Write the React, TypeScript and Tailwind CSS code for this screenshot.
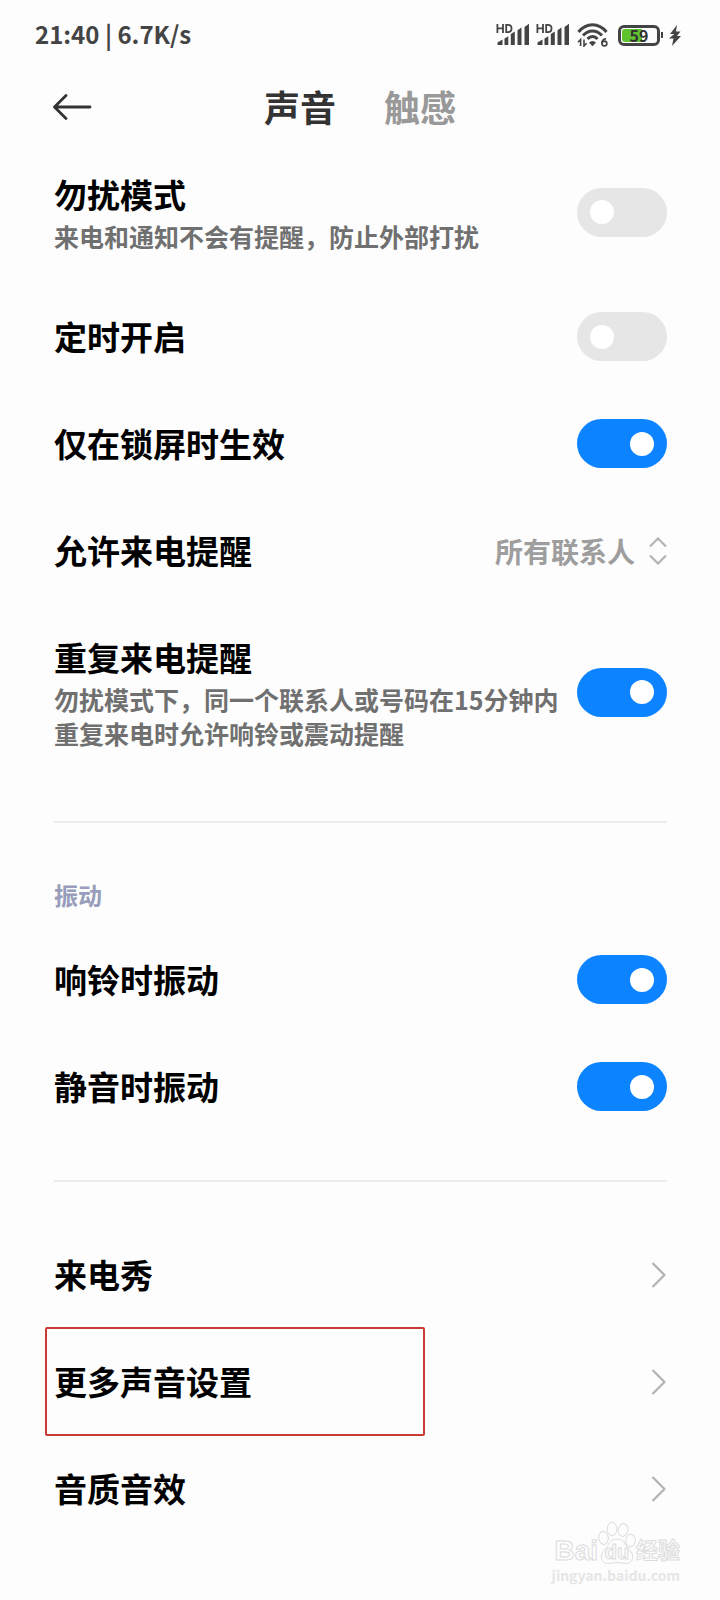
// App.tsx
import { ReactNode, useState } from "react";

function SignalIcon() {
  return (
    <svg width="34" height="24" viewBox="0 0 34 24" aria-hidden="true">
      <g fill="none" stroke="#444" strokeWidth="1.8">
        <path d="M1.4 1v9M7 1v9M1.4 5.4H7" />
        <path d="M10.2 1.9h1.6c5 0 5 7.2 0 7.2h-1.600z" />
      </g>
      <g fill="#444">
        <path d="M1.500 22v-2.400l5-3V22zM8.500 22v-6.600l3.800-2.200V22z" />
        <path d="M14.800 22V11l4-2.600V22zM21.500 22V7.200l4-2.800V22zM28.500 22V4l4.500-3.200V22z" />
      </g>
    </svg>
  );
}

function WifiIcon() {
  return (
    <svg width="32" height="24" viewBox="0 0 32 24" aria-hidden="true">
      <g fill="none" stroke="#444" strokeWidth="3">
        <path d="M1.500 9C9.500-.6 21.500-.6 29.500 9" />
        <path d="M6 12.600c5.600-6.200 13.400-6.200 19 0" />
        <path d="M10.500 16c3-3.400 7-3.400 10 0" />
      </g>
      <path d="M12 19.500c2.200-2 4.800-2 7 0l-3.500 3.700z" fill="#444" />
      <path d="M3.600 23v-6.500l-2.600 2.800M7 16.500V23l2.600-2.800" fill="none" stroke="#444" strokeWidth="1.600" />
      <path d="M29 15.600c-3 .8-4.200 3-4.200 4.800" fill="none" stroke="#444" strokeWidth="1.700" />
      <circle cx="27.400" cy="20.500" r="2.400" fill="none" stroke="#444" strokeWidth="1.700" />
    </svg>
  );
}

function StatusBar() {
  return (
    <header className="flex h-[70px] items-center justify-between pl-[35px] pr-[39px] text-[#444]">
      <span className="pb-[2px] text-[24px] font-bold">21:40 | 6.7K/s</span>
      <div className="flex items-center">
        <div className="flex gap-[6px]">
          <SignalIcon />
          <SignalIcon />
        </div>
        <span className="ml-[7px]">
          <WifiIcon />
        </span>
        <div className="ml-[9px] flex h-[21px] w-[42px] items-center rounded-[6px] border-[3px] border-[#444] p-px">
          <div className="relative h-full w-full">
            <div className="h-full w-[59%] rounded-l-[3px] bg-[#5fc32e]"></div>
            <span className="absolute inset-0 flex items-center justify-center text-[16px] font-bold text-[#333]">59</span>
          </div>
        </div>
        <div className="ml-px h-[6px] w-[2px] bg-[#444]"></div>
        <svg className="ml-[6px]" width="12" height="21" viewBox="0 0 12 21" aria-hidden="true">
          <path d="M8 0 1 9h4.200L0 13.500h4.500L3 21l9-10H8L11.500 6.500H7z" fill="#444" />
        </svg>
      </div>
    </header>
  );
}

function TitleBar() {
  return (
    <nav className="relative flex h-[71px] items-center justify-center gap-[48px] text-[36px] font-bold">
      <button aria-label="返回" className="absolute left-[53px]">
        <svg width="40" height="28" viewBox="0 0 40 28" fill="none" stroke="#333" strokeWidth="2.800" strokeLinecap="round" strokeLinejoin="round">
          <path d="M37 15H2M13 3.500 1.500 15 13 26.500" />
        </svg>
      </button>
      <button className="text-[#333]">声音</button>
      <button className="text-[#999]">触感</button>
    </nav>
  );
}

function Toggle({ id, defaultOn }: { id: string; defaultOn?: boolean }) {
  const [on, setOn] = useState(!!defaultOn);
  return (
    <input
      id={id}
      type="checkbox"
      role="switch"
      checked={on}
      onChange={() => setOn(!on)}
      className="flex h-[49px] w-[90px] shrink-0 appearance-none items-center rounded-full bg-[#e6e6e6] px-[13px] before:size-[24px] before:rounded-full before:bg-white checked:justify-end checked:bg-[#0d84ff]"
    />
  );
}

type RowProps = { id: string; title: string; desc?: string; children: ReactNode };

function Row({ id, title, desc, children }: RowProps) {
  return (
    <div className={desc ? "flex items-center justify-between py-[30px]" : "flex h-[107px] items-center justify-between"}>
      <label htmlFor={id} className="min-w-0">
        <span className="block pb-[2px] text-[33px] leading-[46px] font-bold text-black">{title}</span>
        {desc && <span className="block text-[25px] leading-[34px] font-bold text-[#707070]">{desc}</span>}
      </label>
      {children}
    </div>
  );
}

function LinkRow({ title, marked }: { title: string; marked?: boolean }) {
  return (
    <a href="#" className="relative flex h-[107px] items-center justify-between">
      <span className="pb-[2px] text-[33px] leading-[46px] font-bold text-black">{title}</span>
      <svg width="16" height="28" viewBox="0 0 16 28" fill="none" stroke="#b3b3b3" strokeWidth="2.200" strokeLinejoin="round">
        <path d="M1.500 2l12 12-12 12" />
      </svg>
      {marked && (
        <span className="absolute -inset-y-px -left-[9px] w-[62%] rounded-[2px] border-2 border-[#cc3a36]"></span>
      )}
    </a>
  );
}

function Watermark() {
  return (
    <div className="pointer-events-none absolute right-[40px] bottom-[14px] flex flex-col items-end text-[#fdfdfd]">
      <div className="flex items-end font-[Liberation_Sans,Noto_Sans_CJK_SC,sans-serif] font-bold [-webkit-text-stroke:1px_#dcdcdc]">
        <span className="text-[28px] leading-[28px]">Bai</span>
        <span className="relative flex h-[44px] w-[38px] items-end justify-center">
          <svg className="absolute inset-0" width="38" height="44" viewBox="0 0 38 44" fill="#fdfdfd" stroke="#dcdcdc">
            <ellipse cx="5.500" cy="17" rx="4.800" ry="6.500" transform="rotate(-8 5 17)" />
            <ellipse cx="14" cy="8" rx="4.800" ry="6.800" />
            <ellipse cx="25" cy="9" rx="4.800" ry="6.500" transform="rotate(12 25 9)" />
            <ellipse cx="32.500" cy="19.500" rx="4.800" ry="6.300" transform="rotate(8 32 19)" />
            <path d="M19 18c-8 0-8 7-12.500 11C1 34 3 42.500 9.500 42.500c4 0 6-1 9.500-1s5.500 1 9.500 1c6.500 0 8.500-8.500 3-13.500C27 25 27 18 19 18z" />
          </svg>
          <span className="relative text-[20px] leading-[26px]">du</span>
        </span>
        <span className="text-[22px] leading-[28px]">经验</span>
      </div>
      <div className="text-[14px] leading-[20px] font-bold text-[#e6e6e6]">jingyan.baidu.com</div>
    </div>
  );
}

export default function App() {
  return (
    <div className="relative bg-[#fdfdfd] pb-[57px] font-[Noto_Sans_CJK_SC,sans-serif]">
      <StatusBar />
      <TitleBar />
      <main className="pr-[53px] pl-[54px]">
        <section>
          <Row id="dnd" title="勿扰模式" desc="来电和通知不会有提醒，防止外部打扰">
            <Toggle id="dnd" />
          </Row>
          <Row id="timer" title="定时开启">
            <Toggle id="timer" />
          </Row>
          <Row id="locked" title="仅在锁屏时生效">
            <Toggle id="locked" defaultOn />
          </Row>
          <Row id="callers" title="允许来电提醒">
            <div className="flex items-center gap-[13px]">
              <select id="callers" className="appearance-none text-[28px] font-bold text-[#9e9e9e]">
                <option>所有联系人</option>
              </select>
              <svg width="18" height="28" viewBox="0 0 18 28" fill="none" stroke="#b3b3b3" strokeWidth="2.200">
                <path d="M1 9.500 9 1.500l8 8M1 18.500l8 8 8-8" />
              </svg>
            </div>
          </Row>
          <Row id="repeat" title="重复来电提醒" desc="勿扰模式下，同一个联系人或号码在15分钟内重复来电时允许响铃或震动提醒">
            <Toggle id="repeat" defaultOn />
          </Row>
        </section>

        <section className="mt-[41px] border-t-2 border-[#ebebeb] pt-[56px]">
          <h2 className="mb-[15px] text-[24px] leading-[32px] font-bold text-[#979dba]">振动</h2>
          <Row id="ring" title="响铃时振动">
            <Toggle id="ring" defaultOn />
          </Row>
          <Row id="silent" title="静音时振动">
            <Toggle id="silent" defaultOn />
          </Row>
        </section>

        <section className="mt-[40px] border-t-2 border-[#ebebeb] pt-[39px]">
          <LinkRow title="来电秀" />
          <LinkRow title="更多声音设置" marked />
          <LinkRow title="音质音效" />
        </section>
      </main>
      <Watermark />
    </div>
  );
}
